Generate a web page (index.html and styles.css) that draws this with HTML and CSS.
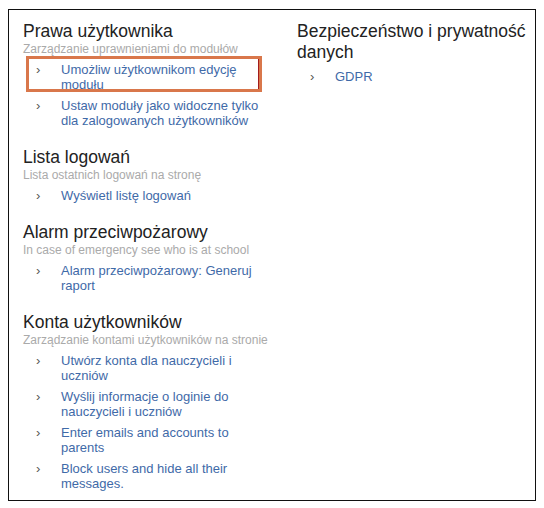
FILE: index.html
```html
<!DOCTYPE html>
<html lang="pl">
<head>
    <meta charset="UTF-8">
    <title>Administracja</title>
    <link rel="stylesheet" href="styles.css">
</head>
<body>
    <div class="panel">
        <div class="col">
            <section class="group">
                <h2 class="group-title">Prawa użytkownika</h2>
                <p class="group-desc">Zarządzanie uprawnieniami do modułów</p>
                <ul class="links">
                    <li class="link-item marked"><span class="chev">›</span><a href="#">Umożliw użytkownikom edycję modułu</a></li>
                    <li class="link-item"><span class="chev">›</span><a href="#">Ustaw moduły jako widoczne tylko dla zalogowanych użytkowników</a></li>
                </ul>
            </section>

            <section class="group">
                <h2 class="group-title">Lista logowań</h2>
                <p class="group-desc">Lista ostatnich logowań na stronę</p>
                <ul class="links">
                    <li class="link-item"><span class="chev">›</span><a href="#">Wyświetl listę logowań</a></li>
                </ul>
            </section>

            <section class="group">
                <h2 class="group-title">Alarm przeciwpożarowy</h2>
                <p class="group-desc">In case of emergency see who is at school</p>
                <ul class="links">
                    <li class="link-item"><span class="chev">›</span><a href="#">Alarm przeciwpożarowy: Generuj raport</a></li>
                </ul>
            </section>

            <section class="group">
                <h2 class="group-title">Konta użytkowników</h2>
                <p class="group-desc">Zarządzanie kontami użytkowników na stronie</p>
                <ul class="links">
                    <li class="link-item"><span class="chev">›</span><a href="#">Utwórz konta dla nauczycieli i uczniów</a></li>
                    <li class="link-item"><span class="chev">›</span><a href="#">Wyślij informacje o loginie do nauczycieli i uczniów</a></li>
                    <li class="link-item"><span class="chev">›</span><a href="#">Enter emails and accounts to parents</a></li>
                    <li class="link-item"><span class="chev">›</span><a href="#">Block users and hide all their messages.</a></li>
                </ul>
            </section>
        </div>

        <div class="col">
            <section class="group">
                <h2 class="group-title">Bezpieczeństwo i prywatność danych</h2>
                <ul class="links links-nodesc">
                    <li class="link-item"><span class="chev">›</span><a href="#">GDPR</a></li>
                </ul>
            </section>
        </div>
    </div>
</body>
</html>
```

FILE: styles.css
```css
body {
    margin: 9px 8px;
    background: #fff;
    font-family: "Liberation Sans", Arial, sans-serif;
}
.panel {
    display: grid;
    grid-template-columns: 250px 1fr;
    column-gap: 24px;
    border: 1px solid #111;
    padding: 11px 8px 9px 14px; /* tytuł zaczyna się przy x=23 */
}
.group {
    margin-bottom: 19px;
}
.group:last-child {
    margin-bottom: 0;
}
.group-title {
    margin: 0;
    font-size: 17.5px;
    font-weight: normal;
    line-height: 21px;
    color: #222;
}
.group-desc {
    margin: 0;
    font-size: 12px;
    line-height: 14px;
    color: #aaa;
}
.links {
    list-style: none;
    margin: 0;
    padding: 0;
}
.links-nodesc {
    margin-top: 3px;
}
.link-item {
    position: relative;
    display: flex;
    margin-top: 6px;
    font-size: 13px;
    line-height: 15px;
}
.chev {
    flex: none;
    width: 25px;
    margin-left: 13px;
    color: #555;
}
.link-item a {
    width: 210px;
    color: #3f6aa8;
    text-decoration: none;
}
.marked::after {
    content: "";
    position: absolute;
    top: -6px;
    left: 3px;
    width: 236px;
    height: 36px;
    box-sizing: border-box;
    border: 3px solid #d9774b;
    box-shadow: inset -1px 0 0 #a31c1c;
}
```
